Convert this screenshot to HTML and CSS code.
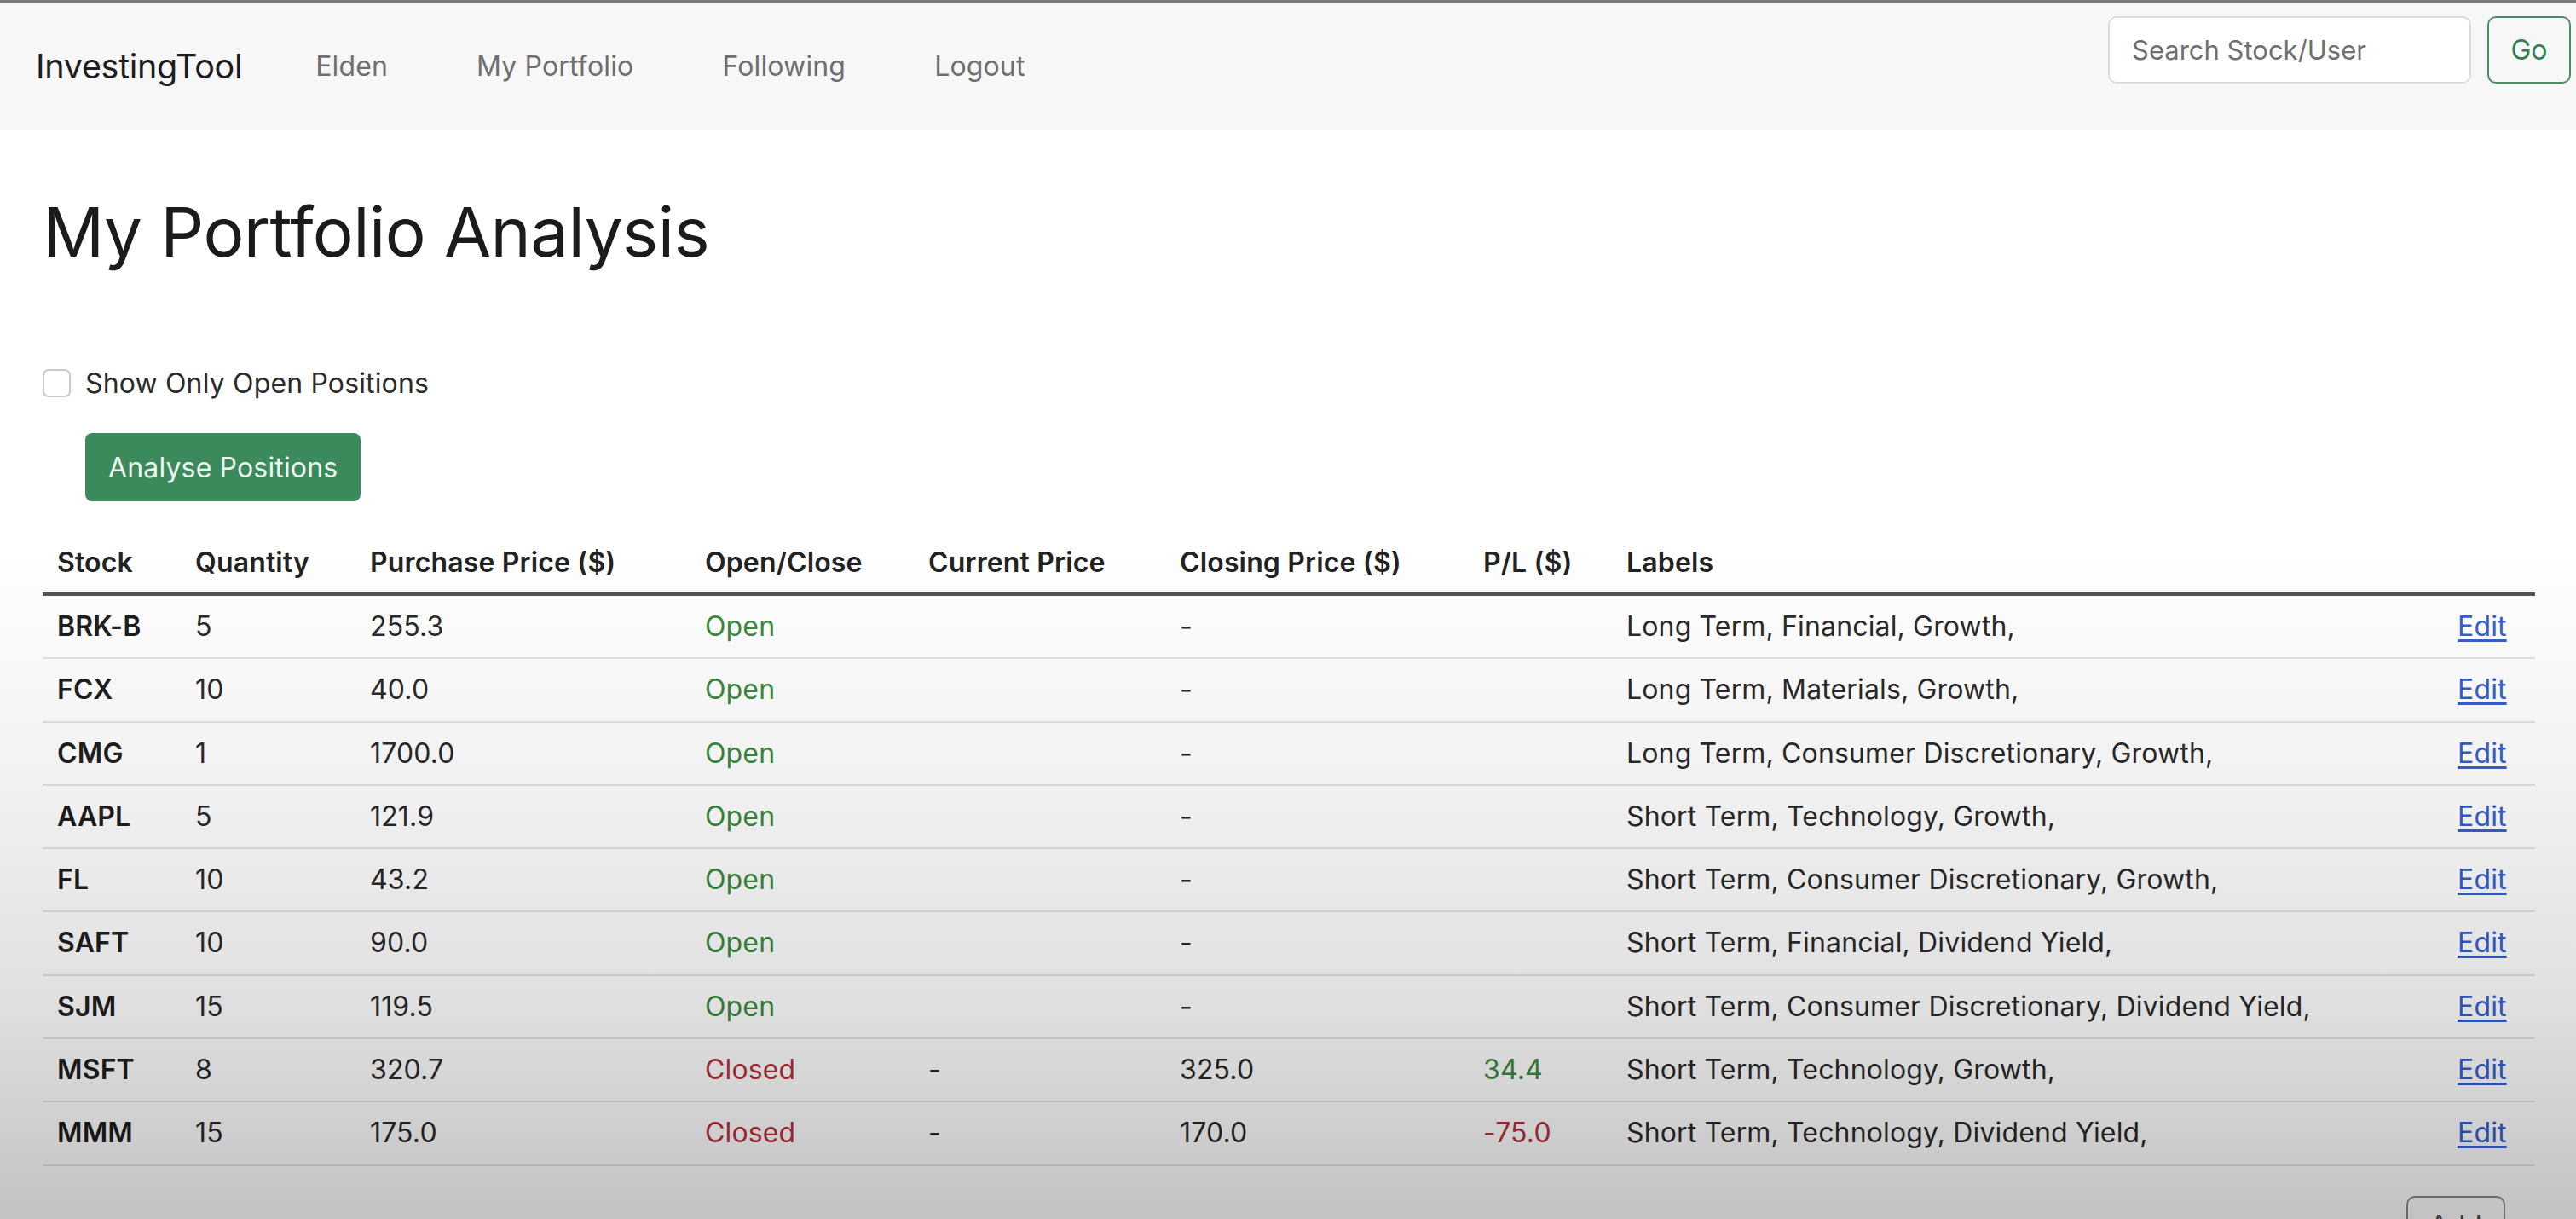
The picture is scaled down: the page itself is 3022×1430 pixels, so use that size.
FILE: index.html
```html
<!DOCTYPE html>
<html lang="en">
<head>
<meta charset="utf-8">
<title>My Portfolio Analysis - InvestingTool</title>
<link rel="stylesheet" href="styles.css">
</head>
<body>
<nav class="navbar">
  <a class="brand" href="#">InvestingTool</a>
  <ul class="nav-links">
    <li><a href="#">Elden</a></li>
    <li><a href="#">My Portfolio</a></li>
    <li><a href="#">Following</a></li>
    <li><a href="#">Logout</a></li>
  </ul>
  <form class="search">
    <input class="search-input" type="text" placeholder="Search Stock/User">
    <button class="btn-go" type="button">Go</button>
  </form>
</nav>

<main class="page">
  <h1 class="title">My Portfolio Analysis</h1>

  <label class="check">
    <span class="check-box"></span>
    <span class="check-label">Show Only Open Positions</span>
  </label>

  <button class="btn-analyse" type="button">Analyse Positions</button>

  <table class="positions">
    <colgroup>
      <col class="c-stock"><col class="c-qty"><col class="c-buy"><col class="c-state"><col class="c-cur"><col class="c-close"><col class="c-pl"><col class="c-labels"><col class="c-edit">
    </colgroup>
    <thead>
      <tr><th>Stock</th><th>Quantity</th><th>Purchase Price ($)</th><th>Open/Close</th><th>Current Price</th><th>Closing Price ($)</th><th>P/L ($)</th><th>Labels</th><th></th></tr>
    </thead>
    <tbody>
      <tr><td class="sym">BRK-B</td><td>5</td><td>255.3</td><td class="open">Open</td><td></td><td>-</td><td></td><td>Long Term, Financial, Growth,</td><td><a href="#">Edit</a></td></tr>
      <tr><td class="sym">FCX</td><td>10</td><td>40.0</td><td class="open">Open</td><td></td><td>-</td><td></td><td>Long Term, Materials, Growth,</td><td><a href="#">Edit</a></td></tr>
      <tr><td class="sym">CMG</td><td>1</td><td>1700.0</td><td class="open">Open</td><td></td><td>-</td><td></td><td>Long Term, Consumer Discretionary, Growth,</td><td><a href="#">Edit</a></td></tr>
      <tr><td class="sym">AAPL</td><td>5</td><td>121.9</td><td class="open">Open</td><td></td><td>-</td><td></td><td>Short Term, Technology, Growth,</td><td><a href="#">Edit</a></td></tr>
      <tr><td class="sym">FL</td><td>10</td><td>43.2</td><td class="open">Open</td><td></td><td>-</td><td></td><td>Short Term, Consumer Discretionary, Growth,</td><td><a href="#">Edit</a></td></tr>
      <tr><td class="sym">SAFT</td><td>10</td><td>90.0</td><td class="open">Open</td><td></td><td>-</td><td></td><td>Short Term, Financial, Dividend Yield,</td><td><a href="#">Edit</a></td></tr>
      <tr><td class="sym">SJM</td><td>15</td><td>119.5</td><td class="open">Open</td><td></td><td>-</td><td></td><td>Short Term, Consumer Discretionary, Dividend Yield,</td><td><a href="#">Edit</a></td></tr>
      <tr><td class="sym">MSFT</td><td>8</td><td>320.7</td><td class="closed">Closed</td><td>-</td><td>325.0</td><td class="gain">34.4</td><td>Short Term, Technology, Growth,</td><td><a href="#">Edit</a></td></tr>
      <tr><td class="sym">MMM</td><td>15</td><td>175.0</td><td class="closed">Closed</td><td>-</td><td>170.0</td><td class="loss">-75.0</td><td>Short Term, Technology, Dividend Yield,</td><td><a href="#">Edit</a></td></tr>
    </tbody>
  </table>

  <div class="actions">
    <button class="btn-add" type="button">Add</button>
  </div>
</main>
<div class="vignette"></div>
</body>
</html>
```

FILE: styles.css
```css
* { box-sizing: border-box; }

html, body {
  margin: 0;
  padding: 0;
  background: #ffffff;
}

body {
  font-family: Inter, "Noto Sans", "Liberation Sans", sans-serif;
  font-size: 32px;
  letter-spacing: 0.15px;
  color: #212529;
  width: 3022px;
  height: 1430px;
  overflow: hidden;
  position: relative;
}

/* ---------- navbar ---------- */
.navbar {
  display: flex;
  align-items: center;
  height: 152px;
  padding: 0 6px 0 42px;
  background: #f7f7f8;
  border-top: 3px solid #7a7a7a;
}

.brand {
  font-size: 39.5px;
  color: #1d1d1f;
  text-decoration: none;
  margin-right: 34px;
  letter-spacing: -0.3px;
}

.nav-links {
  display: flex;
  list-style: none;
  margin: 0;
  padding: 0;
  flex: 1;
}

.nav-links a {
  display: block;
  padding: 0 52px;
  color: #6f6f6f;
  text-decoration: none;
}

.search {
  display: flex;
  align-self: flex-start;
  margin-top: 16px;
  gap: 19px;
}

.search-input {
  width: 426px;
  height: 79px;
  border: 2px solid #dcdcdc;
  border-radius: 10px;
  background: #fff;
  padding: 0 26px;
  font-family: inherit;
  font-size: 31px;
  color: #212529;
}

.search-input::placeholder { color: #707070; }

.btn-go {
  width: 98px;
  height: 79px;
  border: 2px solid #4b8d66;
  border-radius: 10px;
  background: transparent;
  color: #2f8150;
  font-family: inherit;
  font-size: 32px;
}

/* ---------- page ---------- */
.page {
  padding: 0 48px 0 50px;
}

.title {
  font-size: 80px;
  font-weight: 400;
  line-height: 1.2;
  margin: 72px 0 0 0;
  letter-spacing: -0.6px;
  color: #1b1b1b;
}

.check {
  display: flex;
  align-items: center;
  gap: 17px;
  margin-top: 110px;
  color: #2b2b2b;
}

.check-box {
  width: 33px;
  height: 33px;
  border: 2px solid #c9c9c9;
  border-radius: 7px;
  background: #fff;
}

.btn-analyse {
  display: block;
  margin: 39px 0 0 50px;
  height: 80px;
  padding: 0 27px;
  border: none;
  border-radius: 8px;
  background: #3a8a5c;
  color: #eef6f0;
  font-family: inherit;
  font-size: 32px;
  letter-spacing: 0.15px;
}

/* ---------- table ---------- */
.positions {
  margin-top: 35px;
  width: 2924px;
  border-collapse: collapse;
  table-layout: fixed;
}

.c-stock { width: 162px; }
.c-qty { width: 205px; }
.c-buy { width: 393px; }
.c-state { width: 262px; }
.c-cur { width: 295px; }
.c-close { width: 356px; }
.c-pl { width: 168px; }
.c-labels { width: 975px; }
.c-edit { width: 108px; }

.positions th {
  text-align: left;
  font-weight: 600;
  padding: 20px 17px 18px;
  line-height: 34px;
  border-bottom: 4px solid #555;
  white-space: nowrap;
  color: #222;
}

.positions td {
  padding: 20px 17px;
  line-height: 32.3px;
  border-bottom: 2px solid #e3e3e3;
  white-space: nowrap;
  color: #2a2a2a;
}

.positions td.sym { font-weight: 600; color: #1e1e1e; }
.positions td.open { color: #3a8a3e; }
.positions td.closed { color: #b8303d; }
.positions td.gain { color: #3a8a3e; }
.positions td.loss { color: #b8303d; }

.positions a {
  color: #3460d0;
  text-decoration: underline;
  text-underline-offset: 4px;
}

.actions {
  display: flex;
  justify-content: flex-end;
  padding-right: 35px;
  margin-top: 35px;
}

.btn-add {
  width: 116px;
  height: 70px;
  border: 2px solid #8a8a8a;
  border-radius: 10px;
  background: transparent;
  color: #444;
  font-family: inherit;
  font-size: 32px;
}

/* video-capture shading toward the bottom */
.vignette {
  position: absolute;
  inset: 0;
  pointer-events: none;
  background: linear-gradient(to bottom,
    rgba(0,0,0,0) 0px,
    rgba(0,0,0,0) 640px,
    rgba(0,0,0,0.05) 900px,
    rgba(0,0,0,0.12) 1170px,
    rgba(0,0,0,0.24) 1430px);
}
```
